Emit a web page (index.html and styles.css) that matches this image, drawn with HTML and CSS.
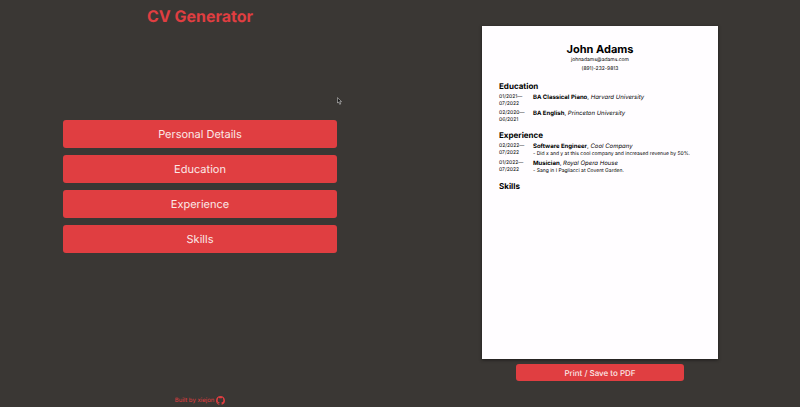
FILE: index.html
```html
<!DOCTYPE html>
<html lang="en">
<head>
<meta charset="utf-8">
<meta name="viewport" content="width=device-width, initial-scale=1">
<title>CV Generator</title>
<link rel="stylesheet" href="styles.css">
</head>
<body>
<div class="app">
  <div class="editor">
    <header class="title"><h1>CV Generator</h1></header>
    <main class="sections">
      <button type="button">Personal Details</button>
      <button type="button">Education</button>
      <button type="button">Experience</button>
      <button type="button">Skills</button>
    </main>
    <footer class="credit">
      <a href="#">Built by xiejon
        <svg viewBox="0 0 16 16" aria-hidden="true"><path fill="currentColor" d="M8 0C3.58 0 0 3.58 0 8c0 3.54 2.29 6.53 5.47 7.59.4.07.55-.17.55-.38 0-.19-.01-.82-.01-1.49-2.01.37-2.53-.49-2.69-.94-.09-.23-.48-.94-.82-1.13-.28-.15-.68-.52-.01-.53.63-.01 1.08.58 1.23.82.72 1.21 1.87.87 2.33.66.07-.52.28-.87.51-1.07-1.78-.2-3.64-.89-3.64-3.95 0-.87.31-1.59.82-2.15-.08-.2-.36-1.02.08-2.12 0 0 .67-.21 2.2.82.64-.18 1.32-.27 2-.27s1.36.09 2 .27c1.53-1.04 2.2-.82 2.2-.82.44 1.1.16 1.92.08 2.12.51.56.82 1.27.82 2.15 0 3.07-1.87 3.75-3.65 3.95.29.25.54.73.54 1.48 0 1.07-.01 1.93-.01 2.2 0 .21.15.46.55.38A8.01 8.01 0 0 0 16 8c0-4.42-3.58-8-8-8z"/></svg>
      </a>
    </footer>
  </div>
  <div class="preview">
    <article class="paper">
      <header class="person">
        <h2>John Adams</h2>
        <p>johnadams@adams.com</p>
        <p>(891)-232-9813</p>
      </header>
      <section>
        <h3>Education</h3>
        <div class="entry">
          <div class="dates">01/2021—07/2022</div>
          <div class="detail"><p class="role"><b>BA Classical Piano</b>, <i>Harvard University</i></p></div>
        </div>
        <div class="entry">
          <div class="dates">02/2020—06/2021</div>
          <div class="detail"><p class="role"><b>BA English</b>, <i>Princeton University</i></p></div>
        </div>
      </section>
      <section>
        <h3>Experience</h3>
        <div class="entry">
          <div class="dates">02/2022—07/2022</div>
          <div class="detail"><p class="role"><b>Software Engineer</b>, <i>Cool Company</i></p><p class="note">- Did x and y at this cool company and increased revenue by 50%.</p></div>
        </div>
        <div class="entry">
          <div class="dates">01/2022—07/2022</div>
          <div class="detail"><p class="role"><b>Musician</b>, <i>Royal Opera House</i></p><p class="note">- Sang in I Pagliacci at Covent Garden.</p></div>
        </div>
      </section>
      <section>
        <h3>Skills</h3>
      </section>
    </article>
    <button type="button" class="print">Print / Save to PDF</button>
  </div>
</div>
<svg class="cursor" viewBox="0 0 12 18" aria-hidden="true"><path d="M1 1v13l3-3 2.500 6 2.500-1-2.500-5.500H11z" fill="#111" stroke="#ccc" stroke-width="1.500"/></svg>
</body>
</html>
```
FILE: styles.css
```css
* {
  box-sizing: border-box;
}

body {
  margin: 0;
  background: #3a3734;
  color: #000;
  font-family: Inter, "Liberation Sans", sans-serif;
  text-rendering: geometricPrecision;
}

h1, h2, h3, p {
  margin: 0;
}

.app {
  display: grid;
  grid-template-columns: 1fr 1fr;
  min-height: 100vh;
}

.editor {
  display: grid;
  grid-template-rows: 32px 1fr 32px;
}

.title {
  display: grid;
  place-items: center;
  color: #e03e41;
}

h1 {
  font-size: 16px;
  line-height: 20px;
  font-weight: 700;
}

.sections {
  display: flex;
  flex-direction: column;
  align-items: center;
  justify-content: center;
  gap: 7px;
  padding-bottom: 34px;
}

button {
  border: 0;
  border-radius: 3px;
  background: #e03e41;
  color: #fbe9e8;
  font-family: inherit;
  text-rendering: inherit;
  padding: 0;
}

.sections button {
  width: 68.500%;
  height: 28px;
  font-size: 11px;
}

.credit {
  display: flex;
  justify-content: center;
  align-items: flex-end;
  padding-bottom: 2px;
}

.credit a {
  display: flex;
  align-items: center;
  gap: 2px;
  color: #e03e41;
  font-size: 6px;
  line-height: 8px;
  text-decoration: none;
}

.credit svg {
  width: 9px;
  height: 9px;
}

.preview {
  display: flex;
  flex-direction: column;
  align-items: center;
  justify-content: center;
  gap: 5px;
}

.paper {
  width: 59%;
  aspect-ratio: 210 / 297;
  padding: 16px 17px;
  background: #fffdff;
  box-shadow: 0 1px 3px #1c1a19;
}

.person {
  text-align: center;
  font-size: 5px;
  line-height: 9px;
  margin-bottom: 7px;
}

h2 {
  font-size: 11px;
  line-height: 14px;
  font-weight: 700;
}

h3 {
  font-size: 8px;
  line-height: 10px;
  font-weight: 700;
  margin-bottom: 3px;
}

section {
  margin-bottom: 6px;
}

.entry {
  display: grid;
  grid-template-columns: 28px 1fr;
  column-gap: 6px;
  margin-bottom: 2px;
}

.dates {
  font-size: 5px;
  line-height: 7px;
}

.role {
  font-size: 6px;
  line-height: 8px;
}

.note {
  font-size: 5px;
  line-height: 7px;
}

.print {
  width: 42%;
  height: 17px;
  font-size: 8px;
  font-weight: 500;
}

.cursor {
  position: absolute;
  left: 337px;
  top: 97px;
  width: 5px;
  height: 8px;
}
```
